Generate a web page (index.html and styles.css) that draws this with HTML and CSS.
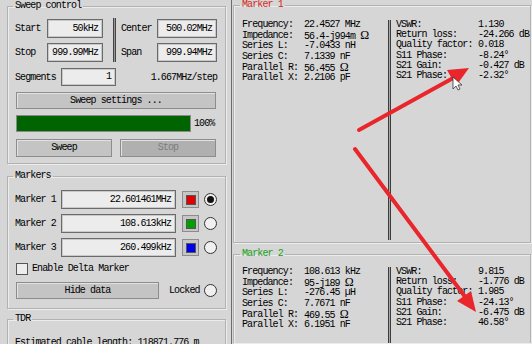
FILE: index.html
```html
<!DOCTYPE html>
<html lang="en">
<head>
  <meta charset="UTF-8" />
  <title>Sweep control</title>
  <link rel="stylesheet" href="styles.css">
</head>
<body>

<div class="app">
  <div class="left">

    <fieldset class="group sweep">
      <legend>Sweep control</legend>
      <div class="range">
        <span class="lbl">Start</span><span class="field">50kHz</span>
        <span class="vsep"></span>
        <span class="lbl">Center</span><span class="field">500.02MHz</span>
        <span class="lbl">Stop</span><span class="field">999.99MHz</span>
        <span class="lbl">Span</span><span class="field">999.94MHz</span>
      </div>
      <div class="segments">
        <span class="lbl seg-lbl">Segments</span>
        <span class="field seg-field">1</span>
        <span class="step">1.667MHz/step</span>
      </div>
      <div class="btn wide">Sweep settings ...</div>
      <div class="progress-row">
        <div class="progress"><div class="bar" style="width: 100%"></div></div>
        <span>100%</span>
      </div>
      <div class="btn-row">
        <div class="btn">Sweep</div>
        <div class="btn disabled">Stop</div>
      </div>
    </fieldset>

    <fieldset class="group markers">
      <legend>Markers</legend>
      <div class="marker-row">
        <span class="lbl">Marker 1</span>
        <span class="field m-field">22.601461MHz</span>
        <span class="swatch"><i class="red"></i></span>
        <span class="radio on"></span>
      </div>
      <div class="marker-row">
        <span class="lbl">Marker 2</span>
        <span class="field m-field">108.613kHz</span>
        <span class="swatch"><i class="green"></i></span>
        <span class="radio"></span>
      </div>
      <div class="marker-row">
        <span class="lbl">Marker 3</span>
        <span class="field m-field">260.499kHz</span>
        <span class="swatch"><i class="blue"></i></span>
        <span class="radio"></span>
      </div>
      <div class="check-row">
        <span class="checkbox"></span>
        <span class="lbl">Enable Delta Marker</span>
      </div>
      <div class="hide-row">
        <div class="btn hide-btn">Hide data</div>
        <span class="locked">Locked</span>
        <span class="radio"></span>
      </div>
    </fieldset>

    <fieldset class="group tdr">
      <legend>TDR</legend>
      <div>Estimated cable length: 118871.776 m</div>
    </fieldset>

  </div>

  <div class="right">

    <fieldset class="group marker m1">
      <legend>Marker 1</legend>
      <div class="cols">
        <div class="kv">
          <span>Frequency:</span><span>22.4527 MHz</span>
          <span>Impedance:</span><span>56.4-j994m <b class="ohm">Ω</b></span>
          <span>Series L:</span><span>-7.0433 nH</span>
          <span>Series C:</span><span>7.1339 nF</span>
          <span>Parallel R:</span><span>56.455 <b class="ohm">Ω</b></span>
          <span>Parallel X:</span><span>2.2106 pF</span>
        </div>
        <div class="divider"></div>
        <div class="kv kv-right">
          <span>VSWR:</span><span>1.130</span>
          <span>Return loss:</span><span>-24.266 dB</span>
          <span>Quality factor:</span><span>0.018</span>
          <span>S11 Phase:</span><span>-8.24°</span>
          <span>S21 Gain:</span><span>-0.427 dB</span>
          <span>S21 Phase:</span><span>-2.32°</span>
        </div>
      </div>
    </fieldset>

    <fieldset class="group marker m2">
      <legend>Marker 2</legend>
      <div class="cols">
        <div class="kv">
          <span>Frequency:</span><span>108.613 kHz</span>
          <span>Impedance:</span><span>95-j189 <b class="ohm">Ω</b></span>
          <span>Series L:</span><span>-276.45 µH</span>
          <span>Series C:</span><span>7.7671 nF</span>
          <span>Parallel R:</span><span>469.55 <b class="ohm">Ω</b></span>
          <span>Parallel X:</span><span>6.1951 nF</span>
        </div>
        <div class="divider"></div>
        <div class="kv kv-right">
          <span>VSWR:</span><span>9.815</span>
          <span>Return loss:</span><span>-1.776 dB</span>
          <span>Quality factor:</span><span>1.985</span>
          <span>S11 Phase:</span><span>-24.13°</span>
          <span>S21 Gain:</span><span>-6.475 dB</span>
          <span>S21 Phase:</span><span>46.58°</span>
        </div>
      </div>
    </fieldset>

  </div>
</div>

<!-- red annotation arrows drawn over the screenshot -->
<svg class="overlay" width="532" height="344" viewBox="0 0 532 344">
  <line x1="359" y1="130" x2="455" y2="77" stroke="#e8262b" stroke-width="4" stroke-linecap="round"/>
  <polygon points="469,68 447,70 456,86" fill="#e8262b"/>
  <line x1="355" y1="149" x2="466" y2="298" stroke="#e8262b" stroke-width="4" stroke-linecap="round"/>
  <polygon points="476,312 457,301 471,291" fill="#e8262b"/>
  <path d="M453 77 v12 l3 -3 l2 4 l2 -1 l-2 -4 h4 z" fill="#fff" stroke="#333" stroke-width="0.8"/>
</svg>

</body>
</html>
```

FILE: styles.css
```css
* {
  box-sizing: border-box;
}

body {
  margin: 0;
  width: 532px;
  height: 344px;
  overflow: hidden;
  position: relative;
  background-color: #d6d6d6;
  font-family: "Liberation Mono", monospace;
  font-size: 10px;
  letter-spacing: -0.9px;
  color: #000;
}

.app {
  display: flex;
  height: 344px;
  overflow: hidden;
}

.left {
  width: 231px;
  flex-shrink: 0;
  padding: 0 5px 0 7px;
  overflow: hidden;
}

.right {
  flex: 1;
  border-left: 1px solid #6c6c6c;
  padding: 0 1px 0 1px;
  overflow: hidden;
}

/* group boxes */
.group {
  margin: 0;
  min-width: 0;
  border: 1px solid #b2b2b2;
  box-shadow: inset 1px 1px 0 #ececec, 1px 1px 0 #ececec;
}

.group legend {
  padding: 0 2px;
  margin-left: -2px;
  line-height: 12px;
}

.lbl {
  display: flex;
  align-items: center;
}

.field {
  display: block;
  height: 100%;
  border: 1px solid #6a6a6a;
  background: #ececec;
  box-shadow: inset 0 0 0 1px #c9c9c9;
  text-align: right;
  padding-right: 4px;
  line-height: 17px;
}

.btn {
  height: 17px;
  line-height: 15px;
  text-align: center;
  background: #c4c4c4;
  border: 1px solid #8c8c8c;
  box-shadow: inset 1px 1px 0 #e2e2e2;
}

.btn.disabled {
  background: #b0b0b0;
  color: #7c7c7c;
}

/* sweep control */
.sweep {
  padding: 7px 8px 6px 7px;
}

.range {
  display: grid;
  grid-template-columns: 32px 56px 18px 36px 60px;
  grid-template-rows: 19px 19px;
  row-gap: 5px;
}

.vsep {
  grid-column: 3;
  grid-row: 1 / 3;
  margin: -1px 0 0 10px;
  width: 3px;
  border-left: 1px solid #444;
  border-right: 1px solid #444;
  background: #9a9a9a;
}

.segments {
  display: flex;
  height: 18px;
  margin-top: 6px;
}

.seg-lbl {
  width: 46px;
}

.seg-field {
  width: 55px;
  line-height: 16px;
}

.step {
  margin-left: auto;
  align-self: center;
}

.wide {
  width: 200px;
  margin: 6px 0 0 1px;
}

.progress-row {
  display: flex;
  align-items: center;
  gap: 3px;
  height: 17px;
  margin: 6px 0 0 1px;
}

.progress {
  width: 175px;
  height: 17px;
  border: 1px solid #8a8a8a;
  background: #e6e6e6;
}

.bar {
  height: 100%;
  background: #006400;
}

.btn-row {
  display: flex;
  gap: 8px;
  margin: 7px 0 0 1px;
}

.btn-row .btn {
  width: 96px;
  height: 18px;
  line-height: 16px;
}

/* markers */
.markers {
  margin-top: 6px;
  padding: 8px 8px 9px 7px;
}

.marker-row {
  display: flex;
  align-items: center;
  height: 19px;
  margin-bottom: 5px;
}

.marker-row .lbl {
  width: 46px;
  height: 100%;
}

.m-field {
  width: 115px;
}

.swatch {
  width: 17px;
  height: 17px;
  margin-left: 6px;
  border: 1px solid #8c8c8c;
  background: #c6c6c6;
  display: flex;
  align-items: center;
  justify-content: center;
}

.swatch i {
  width: 10px;
  height: 10px;
  border: 1px solid #555;
}

.swatch .red { background: #e00000; }
.swatch .green { background: #00a000; }
.swatch .blue { background: #0000e8; }

.radio {
  width: 13px;
  height: 13px;
  margin-left: auto;
  border: 1px solid #333;
  border-radius: 50%;
  background: #f0f0f0;
  display: flex;
  align-items: center;
  justify-content: center;
}

.radio.on::after {
  content: "";
  width: 7px;
  height: 7px;
  border-radius: 50%;
  background: #111;
}

.check-row {
  display: flex;
  align-items: center;
  gap: 4px;
  height: 13px;
  margin: 1px 0 0 1px;
}

.checkbox {
  width: 12px;
  height: 12px;
  border: 1px solid #555;
  background: #ececec;
}

.hide-row {
  display: flex;
  align-items: center;
  height: 17px;
  margin: 7px 0 0 1px;
}

.hide-btn {
  width: 143px;
}

.locked {
  margin-left: 10px;
}

.tdr {
  margin-top: 4px;
  padding: 12px 8px 0 7px;
  height: 36px;
  border-bottom: none;
}

/* marker readouts */
.marker {
  padding: 9px 0 2px 8px;
}

.m1 {
  margin-top: -1px;
}

.m1 legend {
  color: #d42a24;
}

.m2 {
  margin-top: 5px;
  padding-top: 7px;
  padding-bottom: 0;
  border-bottom: none;
}

.m2 legend {
  color: #22a022;
}

.cols {
  display: flex;
  height: 220px;
}

.m2 .cols {
  height: 76px;
}

.kv {
  display: grid;
  grid-template-columns: 62px auto;
  grid-auto-rows: 10.7px;
  line-height: 10.7px;
  width: 146px;
  align-content: start;
}

.kv-right {
  grid-template-columns: 82px auto;
  grid-auto-rows: 10.2px;
  line-height: 10.2px;
  width: auto;
  margin-left: 5px;
}

.divider {
  width: 3px;
  border-left: 1px solid #3c3c3c;
  border-right: 1px solid #3c3c3c;
  background: #a8a8a8;
}

.ohm {
  font-family: "Liberation Serif", serif;
  font-weight: normal;
  font-size: 12px;
  line-height: 8px;
  letter-spacing: 0;
}

.overlay {
  position: absolute;
  top: 0;
  left: 0;
  pointer-events: none;
}
```
